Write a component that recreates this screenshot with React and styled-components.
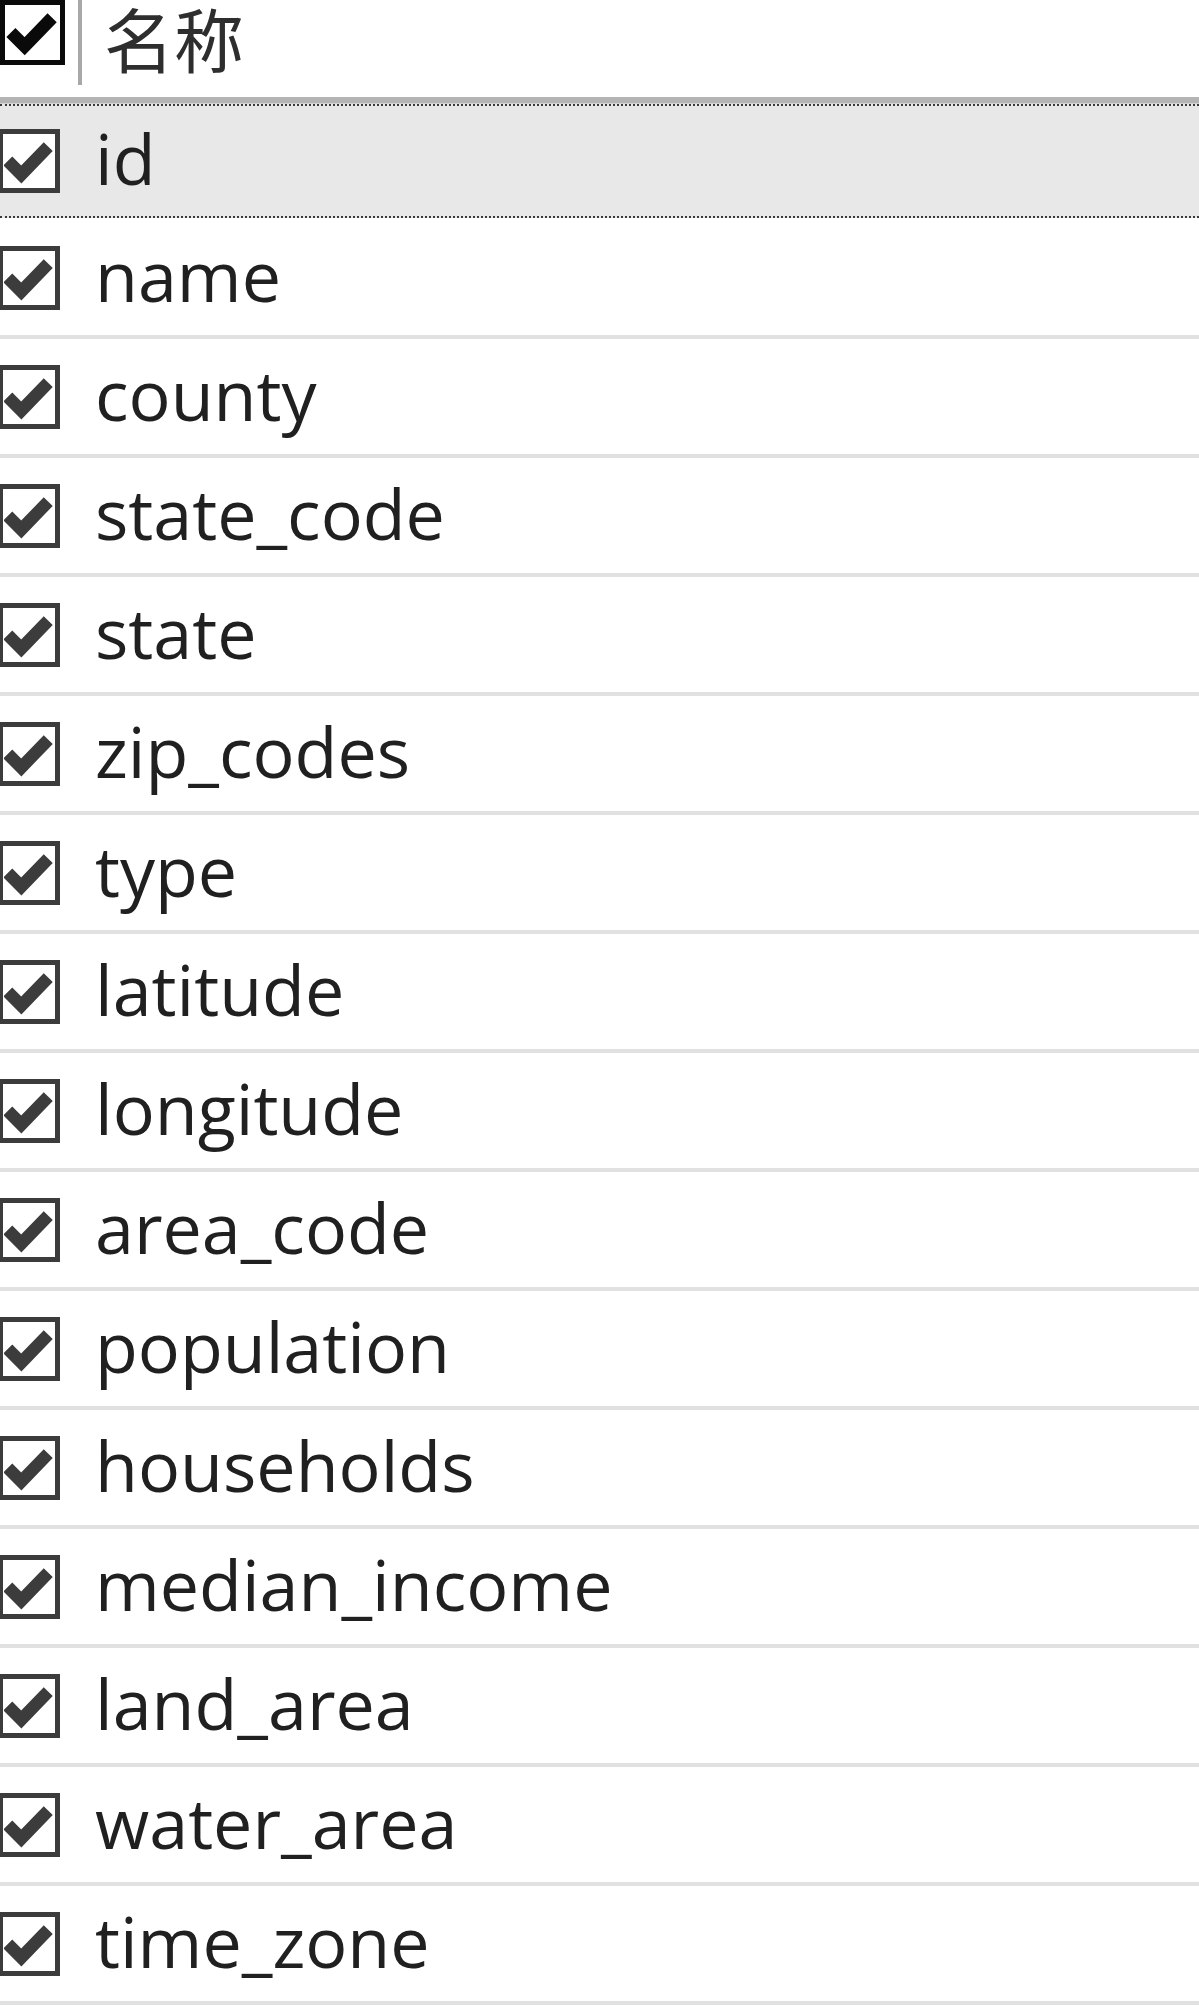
import styled, { createGlobalStyle } from "styled-components";

const GlobalStyle = createGlobalStyle`
    html, body {
        margin: 0;
        padding: 0;
        background: #ffffff;
    }
    body {
        font-family: "Open Sans", "Noto Sans", "Noto Sans CJK SC", sans-serif;
        overflow: hidden;
    }
`;

const columns = [
    "id",
    "name",
    "county",
    "state_code",
    "state",
    "zip_codes",
    "type",
    "latitude",
    "longitude",
    "area_code",
    "population",
    "households",
    "median_income",
    "land_area",
    "water_area",
    "time_zone",
];

// check mark drawn inside the box
const Tick = ({ color }) => (
    <svg width="100%" height="100%" viewBox="0 0 52 54">
        <polyline
            points="4,27 18,41 46,12"
            fill="none"
            stroke={color}
            strokeWidth="13"
            strokeLinecap="butt"
            strokeLinejoin="miter"
        />
    </svg>
);

const App = () => {
    return (
        <ListWrapper>
            <GlobalStyle />
            <Header>
                <CheckBox $header>
                    <Tick color="#0a0a0a" />
                </CheckBox>
                <Divider />
                <HeaderTitle>名称</HeaderTitle>
            </Header>
            {columns.map((col, i) => (
                <Row key={col} $selected={i === 0}>
                    <CheckBox>
                        <Tick color="#3c3c3c" />
                    </CheckBox>
                    <Label>{col}</Label>
                </Row>
            ))}
        </ListWrapper>
    );
};

export default App;

const ListWrapper = styled.div`
    width: 1199px;
    height: 2013px;
    background: #ffffff;
    overflow: hidden;
`;

const Header = styled.div`
    display: flex;
    align-items: flex-start;
    height: 97px;
    border-bottom: 6px solid #b4b4b4;
    box-shadow: 0 1px 0 #d4d4d4;
`;

const CheckBox = styled.div`
    box-sizing: border-box;
    flex: 0 0 auto;
    width: ${(p) => (p.$header ? "65px" : "62px")};
    height: ${(p) => (p.$header ? "65px" : "64px")};
    margin-left: ${(p) => (p.$header ? "0" : "-2px")};
    border: 5px solid ${(p) => (p.$header ? "#0a0a0a" : "#3c3c3c")};
    background: #ffffff;
    padding: 1px;
`;

const Divider = styled.div`
    width: 4px;
    height: 85px;
    margin-left: 13px;
    background: #a8a8a8;
`;

const HeaderTitle = styled.div`
    margin-left: 22px;
    font-family: "Noto Sans CJK SC", "Noto Sans", sans-serif;
    font-size: 70px;
    line-height: 76px;
    color: #2e2e2e;
`;

const Row = styled.div`
    box-sizing: border-box;
    display: flex;
    align-items: center;
    gap: 35px;
    height: ${(p) => (p.$selected ? "114px" : "119px")};
    background: ${(p) => (p.$selected ? "#e8e8e8" : "#ffffff")};
    border-top: ${(p) => (p.$selected ? "2px dotted #3a3a3a" : "none")};
    border-bottom: ${(p) =>
        p.$selected ? "2px dotted #3a3a3a" : "4px solid #e1e1e1"};
    margin-top: ${(p) => (p.$selected ? "1px" : "0")};
    margin-bottom: ${(p) => (p.$selected ? "2px" : "0")};
`;

const Label = styled.span`
    font-size: 70px;
    line-height: 1;
    color: #202020;
    white-space: nowrap;
    position: relative;
    top: -3px;
`;
